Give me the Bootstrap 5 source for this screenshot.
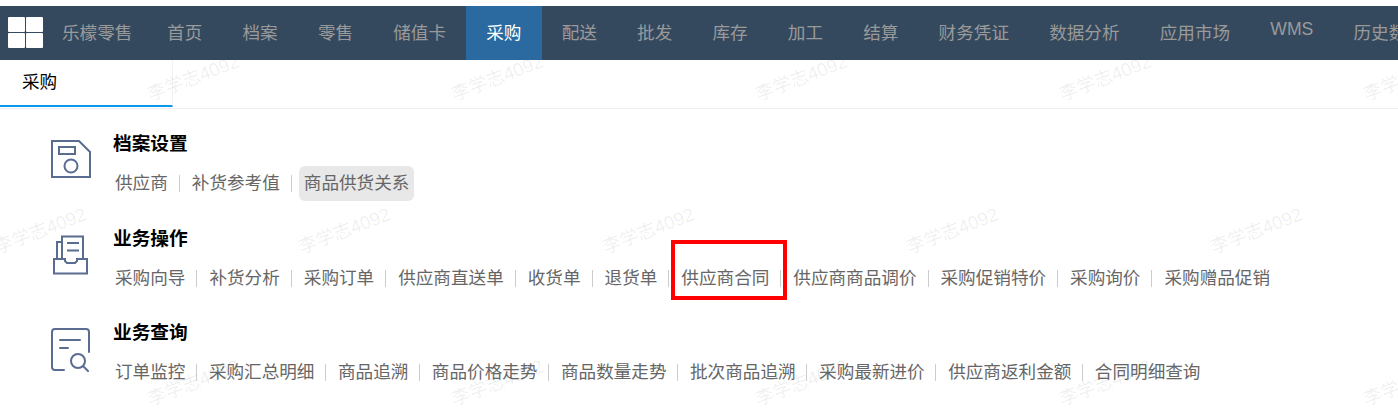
<!DOCTYPE html>
<html lang="zh-CN">
  <head>
    <meta charset="UTF-8" />
    <meta name="viewport" content="width=device-width, initial-scale=1.0" />
    <title>采购</title>
    <link
      href="https://cdn.jsdelivr.net/npm/bootstrap@5.3.3/dist/css/bootstrap.min.css"
      rel="stylesheet"
    />
    <style>
      html,
      body {
        height: 100%;
        overflow: hidden;
      }

      body {
        position: relative;
        padding-top: 6px;
        background: #fff;
        font-family: "Liberation Sans", "Noto Sans CJK SC", sans-serif;
      }

      .top-bar {
        position: relative;
        z-index: 2;
        height: 54px;
        background: #34495e;
        white-space: nowrap;
        overflow: hidden;
      }

      .logo-box {
        flex: none;
        width: 62px;
        padding-left: 8px;
      }

      .logo-box svg {
        display: block;
      }

      .brand-name {
        flex: none;
        width: 85px;
        color: #9a9a9a;
        font-size: 17.6px;
      }

      .top-item {
        flex: none;
        padding: 0 20.1px;
        color: #9a9a9a;
        font-size: 17.6px;
        text-decoration: none;
      }

      .top-item.on {
        background: #2a6aa0;
        color: #fff;
      }

      .top-item.raise {
        padding-bottom: 7px;
      }

      .tab-strip {
        height: 49px;
        border-bottom: 1px solid #eee;
      }

      .tab-one {
        width: 173px;
        height: 47px;
        padding-left: 22px;
        border-right: 1px solid #f2f2f2;
        border-bottom: 2px solid #0a98ee;
        color: #000;
        font-size: 17.6px;
      }

      .menu-area {
        position: relative;
        z-index: 1;
        padding-top: 20px;
      }

      .menu-group {
        height: 94.5px;
      }

      .icon-cell {
        width: 110px;
        flex: none;
      }

      .icon-cell svg {
        display: block;
        fill: none;
        stroke: #5a6d91;
        stroke-width: 2;
      }

      .ps-save {
        padding: 9px 0 0 50px;
      }

      .ps-box {
        padding: 11px 0 0 53px;
      }

      .ps-search {
        padding: 10px 0 0 50px;
      }

      .group-title {
        height: 30px;
        margin: 0 0 7px 3px;
        color: #000;
        font-size: 18.7px;
        font-weight: 700;
        line-height: 30px;
      }

      .link-row {
        height: 35px;
      }

      .menu-link {
        padding: 0 5px;
        border-radius: 6px;
        color: #666;
        font-size: 17.6px;
        line-height: 35px;
        text-decoration: none;
      }

      .menu-link.hover-on {
        background: #e8e8e8;
      }

      .link-sep {
        width: 1px;
        height: 17px;
        margin: 0 7px 0 6px;
        background: #ccc;
      }

      .tight-row .link-sep {
        margin-left: 5.5px;
      }

      .red-frame {
        position: absolute;
        left: 671px;
        top: 240px;
        z-index: 3;
        width: 116px;
        height: 60px;
        border: 4px solid #f00;
      }

      .mark-layer {
        position: absolute;
        inset: 0;
        z-index: 0;
        overflow: hidden;
        pointer-events: none;
      }

      .water-text {
        position: absolute;
        color: rgba(0, 0, 0, 0.07);
        font-size: 18.5px;
        white-space: nowrap;
        transform: rotate(-21deg);
      }
    </style>
  </head>
  <body>
    <div class="mark-layer" id="markLayer"></div>

    <div class="top-bar d-flex align-items-center" id="topBar">
      <div class="logo-box">
        <svg width="36" height="32" viewBox="0 0 36 32">
          <rect x="0" y="0" width="17" height="15" rx="1" fill="#fff" />
          <rect x="18" y="0" width="17" height="15" rx="1" fill="#fff" />
          <rect x="0" y="16" width="17" height="15" rx="1" fill="#fff" />
          <rect x="18" y="16" width="17" height="15" rx="1" fill="#fff" />
        </svg>
      </div>
      <div class="brand-name">乐檬零售</div>
    </div>

    <div class="tab-strip">
      <div class="tab-one d-flex align-items-center">采购</div>
    </div>

    <div class="menu-area" id="menuArea"></div>

    <div class="red-frame"></div>

    <script>
      const topItems = ["首页", "档案", "零售", "储值卡", "采购", "配送", "批发", "库存", "加工", "结算", "财务凭证", "数据分析", "应用市场", "WMS", "历史数据"];

      const saveIcon = `<svg width="42" height="42" viewBox="0 0 42 42">
        <path d="M2 3h27l11 11v25H2z" />
        <rect x="9" y="9" width="16" height="7" />
        <circle cx="21" cy="28" r="6.5" />
      </svg>`;
      const boxIcon = `<svg width="36" height="40" viewBox="0 0 36 40">
        <path d="M4 24V7h5" />
        <path d="M9 24V1.5h21V24" />
        <path d="M14 8h12M14 15.5h12" />
        <path d="M1 24h11v2l2 2h8l2-2v-2h10v14.500H1z" />
      </svg>`;
      const searchIcon = `<svg width="42" height="44" viewBox="0 0 42 44" stroke-linecap="round">
        <path d="M14 42H5a3 3 0 0 1-3-3V4a3 3 0 0 1 3-3h31a3 3 0 0 1 3 3v20" />
        <path d="M10 12h20M10 20h8" />
        <circle cx="28" cy="33" r="7" />
        <path d="M33 38l5 5" />
      </svg>`;

      const groups = [
        { title: "档案设置", icon: saveIcon, iconClass: "ps-save", rowClass: "", links: ["供应商", "补货参考值", "商品供货关系"] },
        { title: "业务操作", icon: boxIcon, iconClass: "ps-box", rowClass: "", links: ["采购向导", "补货分析", "采购订单", "供应商直送单", "收货单", "退货单", "供应商合同", "供应商商品调价", "采购促销特价", "采购询价", "采购赠品促销"] },
        { title: "业务查询", icon: searchIcon, iconClass: "ps-search", rowClass: " tight-row", links: ["订单监控", "采购汇总明细", "商品追溯", "商品价格走势", "商品数量走势", "批次商品追溯", "采购最新进价", "供应商返利金额", "合同明细查询"] },
      ];

      const topBar = document.getElementById("topBar");
      topItems.forEach((name) => {
        const cls = name === "采购" ? " on" : name === "WMS" ? " raise" : "";
        topBar.insertAdjacentHTML(
          "beforeend",
          `<a href="#" class="top-item h-100 d-flex align-items-center${cls}">${name}</a>`
        );
      });

      const menuArea = document.getElementById("menuArea");
      groups.forEach((g) => {
        const links = g.links
          .map((name, n) => {
            const on = name === "商品供货关系" ? " hover-on" : "";
            const sep = n < g.links.length - 1 ? `<span class="link-sep"></span>` : "";
            return `<a href="#" class="menu-link${on}">${name}</a>${sep}`;
          })
          .join("");
        menuArea.insertAdjacentHTML(
          "beforeend",
          `<div class="menu-group d-flex">
            <div class="icon-cell ${g.iconClass}">${g.icon}</div>
            <div>
              <div class="group-title">${g.title}</div>
              <div class="link-row d-flex align-items-center${g.rowClass}">${links}</div>
            </div>
          </div>`
        );
      });

      // watermark grid: staggered rows, real text
      const markLayer = document.getElementById("markLayer");
      const rows = [
        { y: 64, x0: 145 },
        { y: 217, x0: -8 },
        { y: 369, x0: 145 },
      ];
      rows.forEach((row) => {
        for (let x = row.x0; x < 1400; x += 304) {
          markLayer.insertAdjacentHTML(
            "beforeend",
            `<span class="water-text" style="left:${x}px;top:${row.y}px">李学志4092</span>`
          );
        }
      });
    </script>
    <script src="https://cdn.jsdelivr.net/npm/bootstrap@5.3.3/dist/js/bootstrap.bundle.min.js"></script>
  </body>
</html>
